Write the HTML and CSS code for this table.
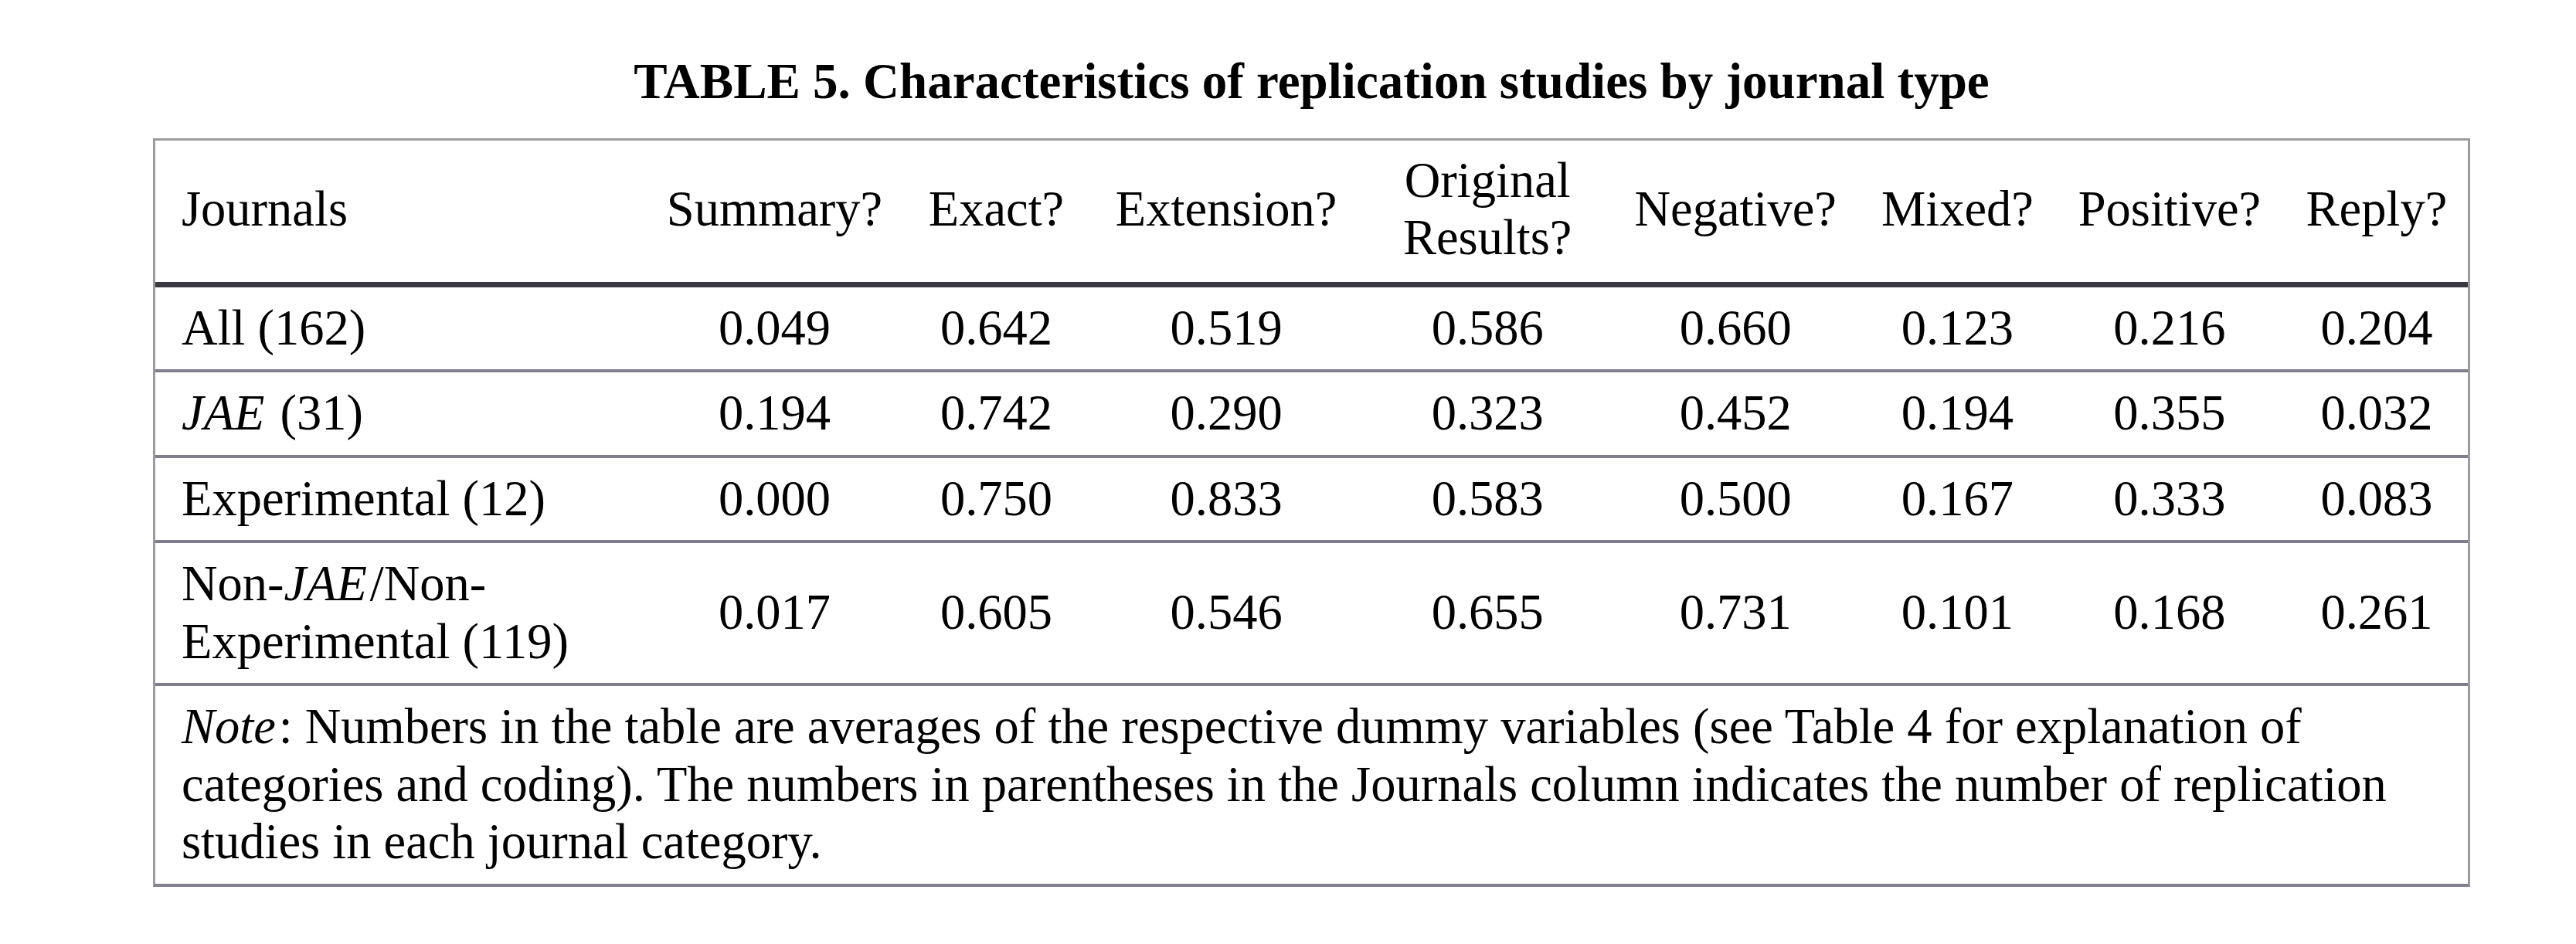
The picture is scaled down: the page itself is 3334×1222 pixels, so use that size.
FILE: index.html
```
<!DOCTYPE html>
<html lang="en">
<head>
<meta charset="utf-8">
<title>TABLE 5. Characteristics of replication studies by journal type</title>
<link rel="stylesheet" href="styles.css">
</head>
<body>
<div class="page">
  <h1 class="caption">TABLE 5. Characteristics of replication studies by journal type</h1>
  <table class="data">
    <colgroup>
      <col class="c-journal">
      <col class="c-summary">
      <col class="c-exact">
      <col class="c-extension">
      <col class="c-original">
      <col class="c-negative">
      <col class="c-mixed">
      <col class="c-positive">
      <col class="c-reply">
    </colgroup>
    <thead>
      <tr>
        <th class="lab">Journals</th>
        <th>Summary?</th>
        <th>Exact?</th>
        <th>Extension?</th>
        <th>Original Results?</th>
        <th>Negative?</th>
        <th>Mixed?</th>
        <th>Positive?</th>
        <th>Reply?</th>
      </tr>
    </thead>
    <tbody>
      <tr>
        <td class="lab">All (162)</td>
        <td>0.049</td><td>0.642</td><td>0.519</td><td>0.586</td><td>0.660</td><td>0.123</td><td>0.216</td><td>0.204</td>
      </tr>
      <tr>
        <td class="lab"><i class="it">JAE</i> (31)</td>
        <td>0.194</td><td>0.742</td><td>0.290</td><td>0.323</td><td>0.452</td><td>0.194</td><td>0.355</td><td>0.032</td>
      </tr>
      <tr>
        <td class="lab">Experimental (12)</td>
        <td>0.000</td><td>0.750</td><td>0.833</td><td>0.583</td><td>0.500</td><td>0.167</td><td>0.333</td><td>0.083</td>
      </tr>
      <tr>
        <td class="lab">Non-<i class="it">JAE</i>/Non-Experimental (119)</td>
        <td>0.017</td><td>0.605</td><td>0.546</td><td>0.655</td><td>0.731</td><td>0.101</td><td>0.168</td><td>0.261</td>
      </tr>
      <tr>
        <td class="note" colspan="9"><i class="it">Note</i>: Numbers in the table are averages of the respective dummy variables (see Table 4 for explanation of categories and coding). The numbers in parentheses in the Journals column indicates the number of replication studies in each journal category.</td>
      </tr>
    </tbody>
  </table>
</div>
</body>
</html>
```

FILE: styles.css
```
html, body {
  margin: 0;
  padding: 0;
  background: #ffffff;
}

body {
  font-family: "Liberation Serif", "Times New Roman", serif;
  color: #000000;
}

.page {
  padding: 68px 0 0 198px;
}

.caption {
  width: 2999px;
  margin: 0 0 36px 0;
  font-size: 65px;
  line-height: 74.5px;
  font-weight: bold;
  text-align: center;
}

.data {
  width: 2999px;
  box-sizing: border-box;
  table-layout: fixed;
  border-collapse: separate;
  border-spacing: 0;
  border: 3px solid #9b9b9b;
  border-bottom: 4px solid #82808e;
  font-size: 64.5px;
  line-height: 74.5px;
}

.c-journal { width: 632.5px; }
.c-summary { width: 338px; }
.c-exact { width: 236px; }
.c-extension { width: 359.3px; }
.c-original { width: 316.8px; }
.c-negative { width: 325.3px; }
.c-mixed { width: 249px; }
.c-positive { width: 300px; }
.c-reply { width: 236px; }

.data th {
  font-weight: normal;
  text-align: center;
  vertical-align: middle;
  padding: 15px 6px 19px;
  border-bottom: 7px solid #393843;
}

.data td {
  text-align: center;
  vertical-align: middle;
  padding: 16px 6px;
  border-bottom: 4px solid #807e8c;
}

.data th.lab,
.data td.lab {
  text-align: left;
  padding-left: 34px;
  padding-right: 34px;
}

.data td.note {
  text-align: left;
  padding: 16px 34px;
  border-bottom: none;
}

.it {
  font-style: italic;
  padding-right: 0.06em;
}
```
